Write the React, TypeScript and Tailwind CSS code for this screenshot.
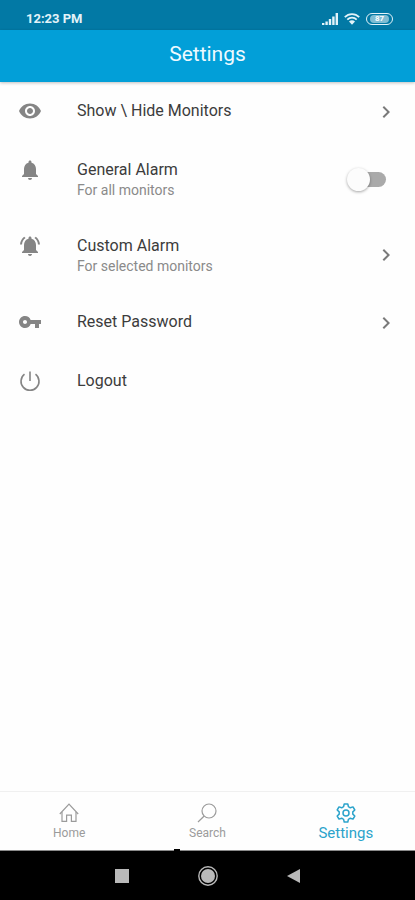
import React from 'react';
import {
  MdChevronRight,
  MdNotifications,
  MdNotificationsActive,
  MdRemoveRedEye,
  MdVpnKey,
} from 'react-icons/md';

const PowerIcon: React.FC = () => (
  <svg className="w-6 h-6" viewBox="0 0 24 24" fill="none" stroke="currentColor" strokeWidth={1.6}>
    <path d="M12 2.5v9.5" />
    <path d="M6.5 5.2a9 9 0 1 0 11 0" />
  </svg>
);

const HomeIcon: React.FC = () => (
  <svg className="w-5 h-5" viewBox="0 0 20 20" fill="none" stroke="currentColor" strokeWidth={1.2}>
    <path d="M0.8 11 10 1.2 19.2 11" />
    <path d="M3 9v9.4h4.6v-6.2h4.8v6.2H17V9" />
  </svg>
);

const SearchIcon: React.FC = () => (
  <svg className="w-5 h-5" viewBox="0 0 20 20" fill="none" stroke="currentColor" strokeWidth={1.2}>
    <circle cx="12" cy="8" r="7" />
    <path d="M7.2 13 1 19" />
  </svg>
);

const GearIcon: React.FC = () => (
  <svg className="w-5 h-5" viewBox="0 0 20 20" fill="none" stroke="currentColor" strokeWidth={1.5} strokeLinejoin="round">
    <path d="M8.2 1h3.6l.6 2.7 1.9 1.1 2.7-.9 1.8 3.1-2 1.9v2.2l2 1.9-1.8 3.1-2.7-.9-1.9 1.1-.6 2.7H8.2l-.6-2.7-1.9-1.1-2.7.9L1.2 13l2-1.9V8.9L1.2 7 3 3.9l2.7.9 1.9-1.1z" />
    <circle cx="10" cy="10" r="3" />
  </svg>
);

const StatusBar: React.FC = () => (
  <div className="h-[30px] pt-2 pl-[26px] pr-[22px] flex items-center justify-between bg-[#0279a5] text-[#e3f3f9]">
    <span className="text-[13px] leading-5 font-bold">12:23 PM</span>
    <div className="flex items-center gap-[6px]">
      <svg className="w-4 h-3" viewBox="0 0 16 12" fill="currentColor">
        <path d="M0 10h2.4v2H0zM3.400 8.500h2.400V12H3.400zM6.800 6h2.400v6H6.800zM10.200 3.500h2.400V12h-2.400zM13.600 0H16v12h-2.400z" />
      </svg>
      <svg className="w-4 h-3" viewBox="0 0 16 12" fill="none" stroke="currentColor" strokeWidth={1.8}>
        <path d="M0.8 4.2c4-4.2 10.4-4.2 14.4 0M3.3 6.7c2.6-2.7 6.8-2.7 9.4 0" />
        <path d="M5 8.5c1.7-1.7 4.3-1.7 6 0l-3 3.2z" fill="currentColor" stroke="none" />
      </svg>
      <span className="w-[27px] h-3 rounded-full border border-current flex items-center justify-center">
        <span className="w-[19px] h-2 rounded-full bg-[#7fbdd3] text-[8px] leading-2 font-bold text-center text-white">87</span>
      </span>
    </div>
  </div>
);

interface RowProps {
  icon: React.ReactNode;
  title: string;
  subtitle?: string;
  arrow?: boolean;
}

const rowClass = 'w-full min-h-[59px] py-[17px] pl-[18px] pr-[17px] flex items-center text-left';

const RowContent: React.FC<RowProps> = ({ icon, title, subtitle }) => (
  <>
    <span className="w-6 mr-[35px] self-start text-[#858585]">{icon}</span>
    <span className="flex-1 self-start">
      <span className="block text-[16px] leading-[23px] text-[#3c3c3c]">{title}</span>
      {subtitle && <span className="block text-[14px] leading-[19px] text-[#8a8a8a]">{subtitle}</span>}
    </span>
  </>
);

const Row: React.FC<RowProps> = (props) => (
  <button type="button" className={rowClass}>
    <RowContent {...props} />
    {props.arrow && <MdChevronRight className="w-6 h-6 text-[#7a7a7a]" />}
  </button>
);

const SwitchRow: React.FC<RowProps> = (props) => (
  <label className={rowClass}>
    <RowContent {...props} />
    <input
      type="checkbox"
      role="switch"
      className="appearance-none relative w-9 h-[15px] mr-3 rounded-full bg-[#aaaaaa] before:absolute before:-left-[3px] before:-top-1 before:w-[23px] before:h-[23px] before:rounded-full before:bg-[#fcfcfc] before:shadow-[0_1px_3px_rgba(0,0,0,0.35)] checked:bg-[#7fcdea] checked:before:left-4"
    />
  </label>
);

const App: React.FC = () => {
  return (
    <div className="min-h-screen flex flex-col bg-[#fefefe] font-['Roboto',sans-serif]">
      <StatusBar />
      <header className="h-[52px] pb-1 flex items-center justify-center bg-[#029fd8] shadow-[0_1px_3px_rgba(0,0,0,0.25)]">
        <h1 className="text-[21px] leading-7 text-[#eefaff]">Settings</h1>
      </header>

      <main className="flex-1">
        <Row icon={<MdRemoveRedEye className="w-6 h-6" />} title="Show \ Hide Monitors" arrow />
        <SwitchRow icon={<MdNotifications className="w-6 h-6" />} title="General Alarm" subtitle="For all monitors" />
        <Row
          icon={<MdNotificationsActive className="w-6 h-6" />}
          title="Custom Alarm"
          subtitle="For selected monitors"
          arrow
        />
        <Row icon={<MdVpnKey className="w-6 h-6" />} title="Reset Password" arrow />
        <Row icon={<PowerIcon />} title="Logout" />
      </main>

      <nav className="h-[60px] pt-[11px] grid grid-cols-3 items-start border-y border-t-[#f0f0f0] border-b-[#8a8a8a]">
        <a href="#home" className="flex flex-col items-center text-[#9b9b9b]">
          <HomeIcon />
          <span className="text-[12px] leading-5">Home</span>
        </a>
        <a href="#search" className="flex flex-col items-center text-[#9b9b9b]">
          <SearchIcon />
          <span className="text-[12px] leading-5">Search</span>
        </a>
        <a href="#settings" className="flex flex-col items-center text-[#2ba3cb]">
          <GearIcon />
          <span className="text-[15px] leading-5">Settings</span>
        </a>
      </nav>

      <div className="relative h-[49px] flex items-center justify-center gap-16 bg-black text-[#b9b9b9]">
        <span className="absolute left-[42%] -top-0.5 w-1.5 h-0.5 bg-black" />
        <button type="button" aria-label="Recent apps">
          <svg className="w-[22px] h-[22px]" viewBox="0 0 22 22" fill="currentColor">
            <rect x="4" y="4" width="14" height="14" />
          </svg>
        </button>
        <button type="button" aria-label="Home screen">
          <svg className="w-[22px] h-[22px]" viewBox="0 0 22 22" fill="currentColor">
            <circle cx="11" cy="11" r="9.2" fill="none" stroke="currentColor" strokeWidth={1.4} />
            <circle cx="11" cy="11" r="7" />
          </svg>
        </button>
        <button type="button" aria-label="Back">
          <svg className="w-[22px] h-[22px]" viewBox="0 0 22 22" fill="currentColor">
            <path d="M17 4v14L4 11z" />
          </svg>
        </button>
      </div>
    </div>
  );
};

export default App;
